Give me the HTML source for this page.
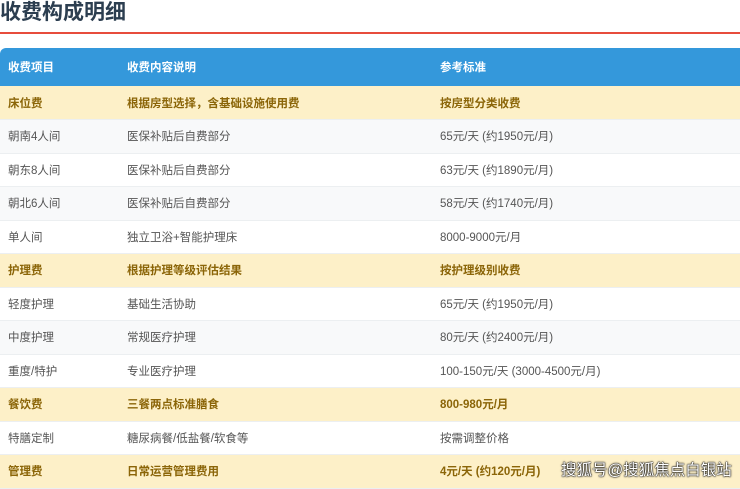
<!DOCTYPE html>
<html><head><meta charset="utf-8"><style>
body{margin:0;width:740px;height:486px;overflow:hidden;background:#fff;font-family:"Liberation Sans","Noto Sans CJK SC",sans-serif;}
h1{margin:0;position:absolute;left:0;top:-2px;font-size:21px;font-weight:bold;color:#2c3e50;line-height:30px;}
.line{position:absolute;left:0;top:32px;width:740px;height:2px;background:#e74c3c;}
table{position:absolute;left:0;top:48px;width:748px;border-collapse:collapse;table-layout:fixed;font-size:11.5px;color:#555;}
th{background:#3498db;color:#fff;text-align:left;font-weight:bold;height:38px;padding:0 0 0 8px;box-sizing:border-box;}
td{height:33.5px;padding:0 0 0 8px;box-sizing:border-box;border-bottom:1px solid #eceff1;}
tr:nth-child(even) td{background:#f8f9fa;}
tr.g td{background:#fdf0c8;color:#8b6508;font-weight:bold;}
.wm{position:absolute;left:561px;top:458px;font-size:15.5px;color:#fff;white-space:nowrap;text-shadow:0 0 2px #000,0 0 1px #000,0 0 1px #000;}
</style></head><body>
<h1>收费构成明细</h1><div class="line"></div>
<table>
<colgroup><col style="width:119px"><col style="width:313px"><col></colgroup>
<thead><tr><th style="border-top-left-radius:6px">收费项目</th><th>收费内容说明</th><th>参考标准</th></tr></thead>
<tbody>
<tr class="g"><td>床位费</td><td>根据房型选择，含基础设施使用费</td><td>按房型分类收费</td></tr>
<tr><td>朝南4人间</td><td>医保补贴后自费部分</td><td>65元/天 (约1950元/月)</td></tr>
<tr><td>朝东8人间</td><td>医保补贴后自费部分</td><td>63元/天 (约1890元/月)</td></tr>
<tr><td>朝北6人间</td><td>医保补贴后自费部分</td><td>58元/天 (约1740元/月)</td></tr>
<tr><td>单人间</td><td>独立卫浴+智能护理床</td><td>8000-9000元/月</td></tr>
<tr class="g"><td>护理费</td><td>根据护理等级评估结果</td><td>按护理级别收费</td></tr>
<tr><td>轻度护理</td><td>基础生活协助</td><td>65元/天 (约1950元/月)</td></tr>
<tr><td>中度护理</td><td>常规医疗护理</td><td>80元/天 (约2400元/月)</td></tr>
<tr><td>重度/特护</td><td>专业医疗护理</td><td>100-150元/天 (3000-4500元/月)</td></tr>
<tr class="g"><td>餐饮费</td><td>三餐两点标准膳食</td><td>800-980元/月</td></tr>
<tr><td>特膳定制</td><td>糖尿病餐/低盐餐/软食等</td><td>按需调整价格</td></tr>
<tr class="g"><td>管理费</td><td>日常运营管理费用</td><td>4元/天 (约120元/月)</td></tr>
</tbody></table>
<div class="wm">搜狐号@搜狐焦点白银站</div>
</body></html>
